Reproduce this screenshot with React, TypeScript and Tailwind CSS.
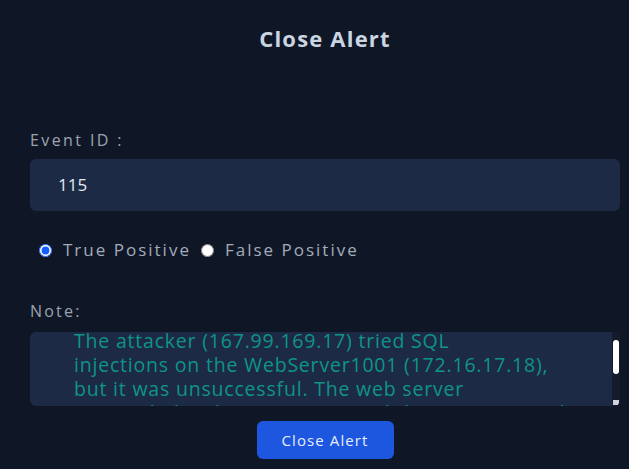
import React, { useState } from 'react';

const noteLines = [
  'The attacker (167.99.169.17) tried SQL',
  'injections on the WebServer1001 (172.16.17.18),',
  'but it was unsuccessful. The web server',
  'responded with error pages and the request was logged.',
];

function App() {
  const [verdict, setVerdict] = useState('true');

  return (
    <div
      className="min-h-screen w-full bg-[#0f1727] pb-4 pl-[30px] pr-[9px]"
      style={{ fontFamily: '"Open Sans", "Noto Sans", sans-serif' }}
    >
      {/* Header */}
      <h1 className="pt-[24px] text-center text-[22px] font-bold leading-[28px] tracking-[1.2px] text-[#cbd5e1]">
        Close Alert
      </h1>

      {/* Event ID */}
      <label className="mt-[76px] block text-[16px] leading-[24px] tracking-[2.4px] text-[#9ca3af]">
        Event ID :
      </label>
      <div className="mt-[7px] flex h-[52px] items-center rounded-md bg-[#1c2a45] pl-[28px] text-[17px] text-[#e2e8f0]">
        115
      </div>

      {/* Verdict */}
      <div className="mt-[27px] flex h-[24px] items-center pl-[9px] text-[17px] tracking-[2px] text-[#a3abb8]">
        <input
          type="radio"
          name="verdict"
          checked={verdict === 'true'}
          onChange={() => setVerdict('true')}
          className="m-0 h-[13px] w-[13px] accent-blue-600"
        />
        <span className="ml-[11px]">True Positive</span>
        <input
          type="radio"
          name="verdict"
          checked={verdict === 'false'}
          onChange={() => setVerdict('false')}
          className="m-0 ml-[10px] h-[13px] w-[13px]"
        />
        <span className="ml-[11px]">False Positive</span>
      </div>

      {/* Note */}
      <label className="mt-[37px] block text-[16px] leading-[24px] tracking-[2.2px] text-[#9ca3af]">
        Note:
      </label>
      <div className="relative mt-[9px] h-[74px] overflow-hidden rounded-md bg-[#1c2a45]">
        <div className="-mt-[3px] pl-[44px] text-[19.5px] leading-[24px] tracking-[0.8px] text-[#0f9488]">
          {noteLines.map((line) => (
            <div key={line} className="whitespace-nowrap">
              {line}
            </div>
          ))}
        </div>
        {/* scrollbar */}
        <div className="absolute right-0 top-0 h-full w-[8px] bg-[#141b2b]">
          <div className="ml-[1px] mt-[8px] h-[34px] w-[6px] rounded-full bg-white" />
          <div className="absolute bottom-[1px] left-[1px] h-[5px] w-[6px] bg-[#cfd4dc]" />
        </div>
      </div>

      {/* Action */}
      <div className="mt-[15px] flex justify-center">
        <button className="h-[38px] w-[137px] rounded-md bg-[#1d57e0] text-[15px] tracking-[1.1px] text-[#e8eefc]">
          Close Alert
        </button>
      </div>
    </div>
  );
}

export default App;
